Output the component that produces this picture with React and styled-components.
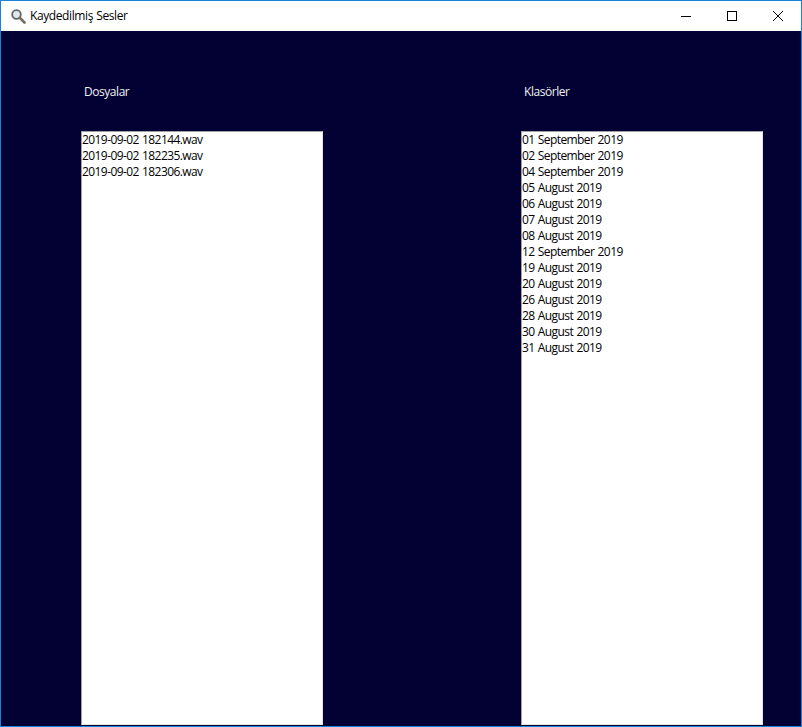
import React from "react";
import styled, { createGlobalStyle } from "styled-components";

const Global = createGlobalStyle`
  html, body { margin: 0; padding: 0; background: #fff; }
  #root { width: 802px; height: 727px; overflow: hidden; }
`;

const Win = styled.div`
  width: 802px;
  height: 727px;
  box-sizing: border-box;
  border: 1px solid #1883d7;
  display: flex;
  flex-direction: column;
  font-family: "Open Sans", "Noto Sans", sans-serif;
  font-size: 12px;
`;

const TitleBar = styled.header`
  height: 30px;
  flex: none;
  background: #fff;
  display: flex;
  align-items: center;
  color: #000;
`;

const TitleIcon = styled.svg`
  width: 16px;
  height: 16px;
  margin-left: 9px;
  margin-right: 4px;
  flex: none;
`;

const Title = styled.span`
  flex: 1;
  line-height: 16px;
  letter-spacing: -0.4px;
  word-spacing: 0.6px;
`;

const WinButton = styled.div`
  width: 46px;
  height: 30px;
  display: flex;
  align-items: center;
  justify-content: center;
`;

const Body = styled.main`
  flex: 1;
  min-height: 0;
  background: #030033;
  display: grid;
  grid-template-columns: 242px 242px;
  column-gap: 198px;
  padding: 0 0 0 80px;
`;

const Column = styled.section`
  display: flex;
  flex-direction: column;
  min-height: 0;
`;

const Label = styled.div`
  color: #f0f0f0;
  height: 100px;
  padding: 53px 0 0 3px;
  box-sizing: border-box;
  line-height: 16px;
  letter-spacing: -0.45px;
`;

const List = styled.ul`
  flex: 1;
  margin: 0 0 1px;
  padding: 0;
  list-style: none;
  background: #fff;
  border: 1px solid #a0a0a0;
  border-bottom-color: #e3e3e3;
  border-right-color: #e3e3e3;
  box-sizing: border-box;
`;

const Item = styled.li`
  height: 16px;
  line-height: 16px;
  color: #000;
  white-space: nowrap;
  letter-spacing: -0.58px;
  word-spacing: 0.7px;
`;

const files = ["2019-09-02 182144.wav", "2019-09-02 182235.wav", "2019-09-02 182306.wav"];
const folders = [
  "01 September 2019", "02 September 2019", "04 September 2019", "05 August 2019",
  "06 August 2019", "07 August 2019", "08 August 2019", "12 September 2019",
  "19 August 2019", "20 August 2019", "26 August 2019", "28 August 2019",
  "30 August 2019", "31 August 2019",
];

export default function App() {
  return (
    <>
      <Global />
      <Win>
        <TitleBar>
          <TitleIcon viewBox="0 0 16 16">
            <circle cx="6.5" cy="6.5" r="4.3" fill="#e4e7e9" stroke="#626568" strokeWidth="1.8" />
            <path d="M10 10l4.5 4.5" stroke="#74705f" strokeWidth="2.6" strokeLinecap="round" />
          </TitleIcon>
          <Title>Kaydedilmiş Sesler</Title>
          <WinButton>
            <svg width="10" height="10" viewBox="0 0 10 10"><path d="M0 5.5h10" stroke="#000" fill="none" /></svg>
          </WinButton>
          <WinButton>
            <svg width="10" height="10" viewBox="0 0 10 10"><rect x=".5" y=".5" width="9" height="9" stroke="#000" fill="none" /></svg>
          </WinButton>
          <WinButton>
            <svg width="10" height="10" viewBox="0 0 10 10"><path d="M0 0l10 10M10 0L0 10" stroke="#000" fill="none" /></svg>
          </WinButton>
        </TitleBar>
        <Body>
          <Column>
            <Label>Dosyalar</Label>
            <List>{files.map((f) => <Item key={f}>{f}</Item>)}</List>
          </Column>
          <Column>
            <Label>Klasörler</Label>
            <List>{folders.map((f) => <Item key={f}>{f}</Item>)}</List>
          </Column>
        </Body>
      </Win>
    </>
  );
}
